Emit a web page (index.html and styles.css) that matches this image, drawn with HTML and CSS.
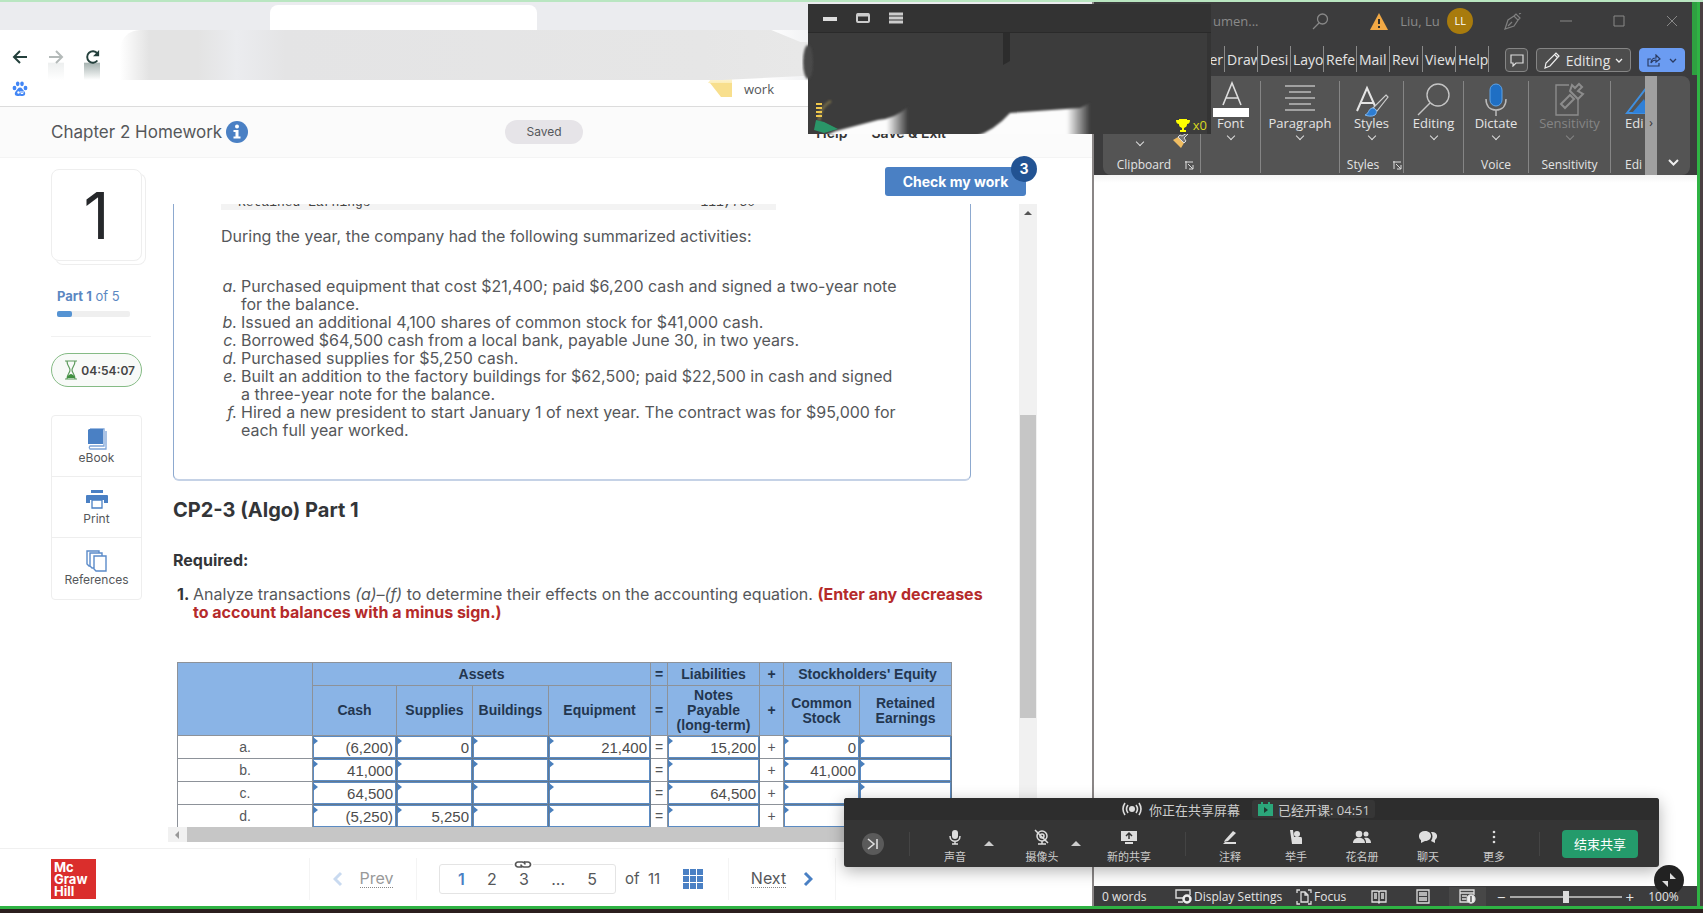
FILE: index.html
```html
<!DOCTYPE html>
<html lang="en">
<head>
    <meta charset="UTF-8">
    <meta name="viewport" content="width=device-width, initial-scale=1.0">
    <title>Chapter 2 Homework</title>
    <link rel="stylesheet" href="styles.css">
</head>
<body>
    <div class="desktop">
        <!-- Browser window -->
        <section class="browser">
            <div class="tab-strip"><div class="tab"></div></div>
            <div class="toolbar">
                <button class="nav-btn" aria-label="Back"><svg width="16" height="14" viewBox="0 0 16 14"><path d="M15 7H2M8 1L2 7l6 6" fill="none" stroke="#24403c" stroke-width="2"/></svg></button>
                <button class="nav-btn forward" aria-label="Forward"><svg width="16" height="14" viewBox="0 0 16 14"><path d="M1 7h13M8 1l6 6-6 6" fill="none" stroke="#b4bab9" stroke-width="2"/></svg></button>
                <button class="nav-btn reload" aria-label="Reload"><svg width="18" height="14" viewBox="0 0 18 16"><path d="M14 12a6.500 6.500 0 1 1 0-8" fill="none" stroke="#24403c" stroke-width="2.200"/><path d="M16 0v7H9z" fill="#24403c"/></svg></button>
                <div class="address"></div>
            </div>
            <div class="bookmarks">
                <svg class="paw" width="16" height="16" viewBox="0 0 16 16" fill="#4286f5"><ellipse cx="2.500" cy="7" rx="1.900" ry="2.300"/><ellipse cx="5.700" cy="2.800" rx="1.800" ry="2.400"/><ellipse cx="10" cy="2.800" rx="1.800" ry="2.400"/><ellipse cx="13.500" cy="7" rx="1.900" ry="2.300"/><path d="M8 6.500c2 0 2.500 2 4 3.500 2 2 1.500 5-1.500 5-1 0-1.500-.3-2.500-.3s-1.500.3-2.500.3c-3 0-3.500-3-1.500-5C5.500 8.500 6 6.500 8 6.500z"/><circle cx="6.500" cy="11.500" r="1.200" fill="#fff"/><path d="M9 10v2.500h2V10" fill="none" stroke="#fff"/></svg>
                <a class="bookmark" href="#">
                    <svg width="26" height="34" viewBox="0 0 26 34"><defs><linearGradient id="fold" x1="0" y1="1" x2="0" y2="0"><stop offset="0" stop-color="#fbe9a6"/><stop offset="1" stop-color="#fff" stop-opacity="0"/></linearGradient></defs><path d="M0 18L13 0h11v20z" fill="url(#fold)"/><path d="M2 18h22v14H13z" fill="#f8df8d"/></svg>
                    work
                </a>
            </div>

            <header class="page-header">
                <h1>Chapter 2 Homework</h1>
                <svg class="info" width="22" height="22" viewBox="0 0 22 22"><circle cx="11" cy="11" r="11" fill="#4a80c4"/><circle cx="11" cy="5.500" r="2" fill="#fff"/><path d="M7.500 9H12.500v6.500H14.500v2H7.500v-2h2V11h-2z" fill="#fff"/></svg>
                <span class="saved">Saved</span>
                <nav class="header-links"><a href="#">Help</a><a href="#">Save &amp; Exit</a></nav>
            </header>

            <main class="main">
                <aside class="sidebar">
                    <div class="question-card">1</div>
                    <div class="part">
                        <b>Part 1</b> of 5
                        <div class="progress"><span></span></div>
                    </div>
                    <div class="timer">
                        <svg width="14" height="20" viewBox="0 0 14 20"><path d="M1 1h12M1 19h12M3 1c0 5 3 6 3 9s-3 4-3 9M11 1c0 5-3 6-3 9s3 4 3 9" fill="none" stroke="#5c9a5c" stroke-width="1.200"/><path d="M3 18c0-3 4-4 4-4s4 1 4 4z" fill="#3f8f3f"/></svg>
                        04:54:07
                    </div>
                    <div class="tools">
                        <button>
                            <svg width="22" height="22" viewBox="0 0 22 22"><path d="M4 1h14v17H4a2 2 0 0 0 0 3h14M20 3v18H4" fill="none" stroke="#7da4d8" stroke-width="1.300"/><path d="M3 1h14v15H2V2z" fill="#4a80c4"/></svg>
                            eBook
                        </button>
                        <button>
                            <svg width="24" height="22" viewBox="0 0 24 22"><path d="M6 1h12v3H6zM2 6h20q1 0 1 1v7h-4v-3H5v3H1V7q0-1 1-1z" fill="#4a80c4"/><path d="M7 11h10v8H7z" fill="#fff" stroke="#4a80c4" stroke-width="1.300"/></svg>
                            Print
                        </button>
                        <button>
                            <svg width="22" height="22" viewBox="0 0 22 22" fill="#fff" stroke="#5b8bc9" stroke-width="1.400"><path d="M1 1h12v15H3L1 14z"/><path d="M4 3h12v15H6l-2-2z"/><path d="M8 6h12v15H10l-2-2z"/></svg>
                            References
                        </button>
                    </div>
                </aside>

                <div class="content">
                    <div class="actions">
                        <button class="check-btn">Check my work<span class="badge">3</span></button>
                    </div>
                    <div class="scroller">
                        <div class="scroll-view">
                            <div class="problem">
                                <div class="ledger"><span>Retained Earnings</span><span>111,750</span></div>
                                <p>During the year, the company had the following summarized activities:</p>
                                <ol class="activities">
                                    <li><i>a.</i><span>Purchased equipment that cost $21,400; paid $6,200 cash and signed a two-year note<br>for the balance.</span></li>
                                    <li><i>b.</i><span>Issued an additional 4,100 shares of common stock for $41,000 cash.</span></li>
                                    <li><i>c.</i><span>Borrowed $64,500 cash from a local bank, payable June 30, in two years.</span></li>
                                    <li><i>d.</i><span>Purchased supplies for $5,250 cash.</span></li>
                                    <li><i>e.</i><span>Built an addition to the factory buildings for $62,500; paid $22,500 in cash and signed<br>a three-year note for the balance.</span></li>
                                    <li><i>f.</i><span>Hired a new president to start January 1 of next year. The contract was for $95,000 for<br>each full year worked.</span></li>
                                </ol>
                            </div>
                            <h2>CP2-3 (Algo) Part 1</h2>
                            <h3>Required:</h3>
                            <div class="requirement">
                                <b>1.</b>
                                <span>Analyze transactions <i>(a)–(f)</i> to determine their effects on the accounting equation. <strong>(Enter any decreases<br>to account balances with a minus sign.)</strong></span>
                            </div>

                            <table class="equation">
                                <colgroup>
                                    <col class="c-label"><col class="c-cash"><col class="c-mid"><col class="c-mid"><col class="c-equip"><col class="c-eq"><col class="c-notes"><col class="c-plus"><col class="c-mid"><col class="c-notes">
                                </colgroup>
                                <thead>
                                    <tr class="groups">
                                        <th rowspan="2"></th><th colspan="4">Assets</th><th>=</th><th>Liabilities</th><th>+</th><th colspan="2">Stockholders' Equity</th>
                                    </tr>
                                    <tr class="accounts">
                                        <th>Cash</th><th>Supplies</th><th>Buildings</th><th>Equipment</th><th>=</th><th>Notes Payable (long-term)</th><th>+</th><th>Common Stock</th><th>Retained Earnings</th>
                                    </tr>
                                </thead>
                                <tbody>
                                    <tr>
                                        <td>a.</td>
                                        <td class="cell"><input aria-label="a Cash" value="(6,200)"></td>
                                        <td class="cell"><input aria-label="a Supplies" value="0"></td>
                                        <td class="cell"><input aria-label="a Buildings"></td>
                                        <td class="cell"><input aria-label="a Equipment" value="21,400"></td>
                                        <td>=</td>
                                        <td class="cell"><input aria-label="a Notes Payable" value="15,200"></td>
                                        <td>+</td>
                                        <td class="cell"><input aria-label="a Common Stock" value="0"></td>
                                        <td class="cell"><input aria-label="a Retained Earnings"></td>
                                    </tr>
                                    <tr>
                                        <td>b.</td>
                                        <td class="cell"><input aria-label="b Cash" value="41,000"></td>
                                        <td class="cell"><input aria-label="b Supplies"></td>
                                        <td class="cell"><input aria-label="b Buildings"></td>
                                        <td class="cell"><input aria-label="b Equipment"></td>
                                        <td>=</td>
                                        <td class="cell"><input aria-label="b Notes Payable"></td>
                                        <td>+</td>
                                        <td class="cell"><input aria-label="b Common Stock" value="41,000"></td>
                                        <td class="cell"><input aria-label="b Retained Earnings"></td>
                                    </tr>
                                    <tr>
                                        <td>c.</td>
                                        <td class="cell"><input aria-label="c Cash" value="64,500"></td>
                                        <td class="cell"><input aria-label="c Supplies"></td>
                                        <td class="cell"><input aria-label="c Buildings"></td>
                                        <td class="cell"><input aria-label="c Equipment"></td>
                                        <td>=</td>
                                        <td class="cell"><input aria-label="c Notes Payable" value="64,500"></td>
                                        <td>+</td>
                                        <td class="cell"><input aria-label="c Common Stock"></td>
                                        <td class="cell"><input aria-label="c Retained Earnings"></td>
                                    </tr>
                                    <tr>
                                        <td>d.</td>
                                        <td class="cell"><input aria-label="d Cash" value="(5,250)"></td>
                                        <td class="cell"><input aria-label="d Supplies" value="5,250"></td>
                                        <td class="cell"><input aria-label="d Buildings"></td>
                                        <td class="cell"><input aria-label="d Equipment"></td>
                                        <td>=</td>
                                        <td class="cell"><input aria-label="d Notes Payable"></td>
                                        <td>+</td>
                                        <td class="cell"><input aria-label="d Common Stock"></td>
                                        <td class="cell"><input aria-label="d Retained Earnings"></td>
                                    </tr>
                                </tbody>
                            </table>
                        </div>
                        <div class="v-bar"><svg width="10" height="6" viewBox="0 0 10 6"><path d="M5 1l4 4H1z" fill="#555"/></svg><span></span></div>
                        <div class="h-bar"><svg width="6" height="10" viewBox="0 0 6 10"><path d="M1 5l4-4v8z" fill="#999"/></svg><span></span></div>
                    </div>
                </div>
            </main>

            <footer class="page-footer">
                <div class="logo">Mc<br>Graw<br>Hill</div>
                <a class="prev" href="#"><svg width="10" height="16" viewBox="0 0 10 16"><path d="M8 2L2 8l6 6" fill="none" stroke="#c9daf0" stroke-width="3"/></svg><span>Prev</span></a>
                <div class="pager">
                    <a class="current" href="#">1</a><a href="#">2</a><a href="#">3<svg class="link-icon" width="20" height="9" viewBox="0 0 20 9"><path d="M9 7H5a2.500 2.500 0 0 1 0-5h4q3 0 3 2.500M11 2h4a2.500 2.500 0 0 1 0 5h-4q-3 0-3-2.500" fill="none" stroke="#555" stroke-width="1.700"/></svg></a><span>...</span><a href="#">5</a>
                </div>
                <span class="total">of&nbsp; 11</span>
                <svg class="grid-icon" width="20" height="20" viewBox="0 0 20 20" fill="#4a80c4"><path d="M0 0h6v6H0zM7 0h6v6H7zM14 0h6v6h-6zM0 7h6v6H0zM7 7h6v6H7zM14 7h6v6h-6zM0 14h6v6H0zM7 14h6v6H7zM14 14h6v6h-6z"/></svg>
                <a class="next" href="#"><span>Next</span><svg width="10" height="16" viewBox="0 0 10 16"><path d="M2 2l6 6-6 6" fill="none" stroke="#4a80c4" stroke-width="3"/></svg></a>
            </footer>
        </section>

        <!-- Word window -->
        <section class="word">
            <div class="word-title">
                <span class="doc-name">umen...</span>
                <svg class="t-search" width="17" height="17" viewBox="0 0 17 17" fill="none" stroke="#888" stroke-width="1.300"><circle cx="10.500" cy="6" r="5"/><path d="M7 10l-6 6"/></svg>
                <svg class="t-warn" width="18" height="17" viewBox="0 0 18 17"><path d="M9 0l9 17H0z" fill="#f2a945"/><path d="M9 6v5M9 13v2" stroke="#33302a" stroke-width="2"/></svg>
                <span class="user">Liu, Lu</span>
                <span class="avatar">LL</span>
                <svg class="t-pen" width="18" height="17" viewBox="0 0 18 17" fill="none" stroke="#808080" stroke-width="1.200"><path d="M1 16l3-9 6-4 4 4-4 6zM10 3l2-2 4 4-2 2M15 1l2-1M4 13l4-4"/></svg>
                <svg class="win" width="12" height="12" viewBox="0 0 12 12"><path d="M0 6h12" stroke="#888"/></svg>
                <svg class="win" width="12" height="12" viewBox="0 0 12 12"><path d="M1 1h10v10H1z" fill="none" stroke="#888"/></svg>
                <svg class="win" width="12" height="12" viewBox="0 0 12 12"><path d="M1 1l10 10M11 1L1 11" stroke="#888"/></svg>
            </div>
            <div class="word-tabs">
                <div class="tab-list">
                    <a class="cut" href="#">er</a><a href="#">Draw</a><a href="#">Desi</a><a href="#">Layo</a><a href="#">Refe</a><a href="#">Mail</a><a href="#">Revi</a><a href="#">View</a><a href="#">Help</a>
                </div>
                <button class="comment" aria-label="Comments"><svg width="14" height="13" viewBox="0 0 14 13"><path d="M1 1h12v8H6l-3 3V9H1z" fill="none" stroke="#ddd" stroke-width="1.200"/></svg></button>
                <button class="mode"><svg width="17" height="17" viewBox="0 0 17 17" fill="none" stroke="#eee" stroke-width="1.200"><path d="M1 16l1-5L12 1l3 3L6 14zM11 3l3 3"/></svg>Editing<svg width="8" height="5" viewBox="0 0 8 5"><path d="M1 1l3 3 3-3" fill="none" stroke="#eee" stroke-width="1.300"/></svg></button>
                <button class="share" aria-label="Share"><svg width="14" height="13" viewBox="0 0 14 13" fill="none" stroke="#2b3c63" stroke-width="1.200"><path d="M4 5H1v7h11V9M4 9c0-4 3-5 5-5V1l4 4-4 3V6C7 6 5 7 4 9z"/></svg><svg width="8" height="5" viewBox="0 0 8 5"><path d="M1 1l3 3 3-3" fill="none" stroke="#2b3c63" stroke-width="1.300"/></svg></button>
            </div>
            <div class="ribbon">
                <div class="group g-clip">
                    <div class="clip-row"><span class="chev"></span><svg width="18" height="17" viewBox="0 0 18 17"><path d="M2 8l8 8 3-5-6-6z" fill="#f0bd62"/><path d="M7 5l6 6 2-2-2-3 4-4-1-1-5 3-2-1z" fill="#777" stroke="#ddd"/></svg></div>
                    <div class="group-name">Clipboard<svg width="9" height="9" viewBox="0 0 9 9" fill="none" stroke="#ddd"><path d="M0 1h8M1 0v8M3 3l5 5M8 4v4H4"/></svg></div>
                </div>
                <div class="group g-font">
                    <svg width="38" height="36" viewBox="0 0 38 36"><path d="M11 24L20 2l9 22M14 17h12" fill="none" stroke="#ddd" stroke-width="1.600"/><path d="M1 27h36v9H1z" fill="#fff"/></svg>
                    <button>Font</button><span class="chev"></span>
                </div>
                <div class="group g-para">
                    <svg width="32" height="36" viewBox="0 0 32 36"><path d="M1 5h30M5 11h22M1 17h30M5 23h22M1 29h30" stroke="#bbb" stroke-width="1.600"/></svg>
                    <button>Paragraph</button><span class="chev"></span>
                </div>
                <div class="group g-styles">
                    <svg width="36" height="36" viewBox="0 0 36 36"><path d="M3 30L13 7l8 18M7 22h12" fill="none" stroke="#e4e4e4" stroke-width="2"/><path d="M32 14l2 2-11 14-4-3z" fill="#545454" stroke="#ccc" stroke-width="1.200"/><path d="M18 27c4 0 6 4 3 7-3 2-8 1-10 0 4-1 3-6 7-7z" fill="#2d7dd2" stroke="#7cb5ef"/></svg>
                    <button>Styles</button><span class="chev"></span>
                    <div class="group-name">Styles<svg width="9" height="9" viewBox="0 0 9 9" fill="none" stroke="#ddd"><path d="M0 1h8M1 0v8M3 3l5 5M8 4v4H4"/></svg></div>
                </div>
                <div class="group g-edit">
                    <svg width="36" height="36" viewBox="0 0 36 36" fill="none" stroke="#c4c4c4" stroke-width="1.400"><circle cx="22" cy="14" r="11"/><path d="M14 22L2 34"/></svg>
                    <button>Editing</button><span class="chev"></span>
                </div>
                <div class="group g-voice">
                    <svg width="24" height="36" viewBox="0 0 24 36"><rect x="6" y="3" width="12" height="22" rx="6" fill="#1f6fc4" stroke="#5ea3e6"/><path d="M2 18c0 7 4 11 10 11s10-4 10-11M12 29v6" fill="none" stroke="#bbb" stroke-width="1.500"/></svg>
                    <button>Dictate</button><span class="chev"></span>
                    <div class="group-name">Voice</div>
                </div>
                <div class="group g-sens">
                    <svg width="32" height="36" viewBox="0 0 32 36" fill="none" stroke="#8c8c8c" stroke-width="1.400"><path d="M15 4H2v30h22V18"/><path d="M7 23l9-9 4 4-9 9zM16 10l8 8 5-5-5-3 4-4-3-3-4 4-3-3z" stroke-width="2"/></svg>
                    <button disabled>Sensitivity</button><span class="chev dim"></span>
                    <div class="group-name">Sensitivity</div>
                </div>
                <div class="group g-editor">
                    <svg width="34" height="36" viewBox="0 0 34 36"><path d="M2 32L22 6l6 6v20z" fill="none" stroke="#3f8fe0" stroke-width="2"/><path d="M7 32L19 18l6 14z" fill="#2f80d8"/></svg>
                    <button>Edi</button>
                    <div class="group-name">Edi</div>
                </div>
                <div class="ribbon-scroll">›</div>
                <div class="ribbon-end"><svg width="11" height="7" viewBox="0 0 11 7"><path d="M1 1l4.500 4.500L10 1" fill="none" stroke="#eee" stroke-width="2"/></svg></div>
            </div>
            <div class="document"></div>
            <div class="status">
                <span class="words">0 words</span>
                <span class="display"><svg width="17" height="15" viewBox="0 0 17 15"><path d="M8 9H1V1h14v5M3 13h5" fill="none" stroke="#ddd" stroke-width="1.400"/><circle cx="12" cy="10" r="3.500" fill="none" stroke="#eee" stroke-width="2.500"/></svg>Display Settings</span>
                <span class="focus"><svg width="16" height="16" viewBox="0 0 16 16" fill="none" stroke="#ddd" stroke-width="1.300"><path d="M1 4V1h3M12 1h3v3M15 12v3h-3M4 15H1v-3M5 3h4l3 3v7H5zM9 3v3h3"/></svg>Focus</span>
                <svg class="view" width="16" height="14" viewBox="0 0 16 14" fill="none" stroke="#ddd" stroke-width="1.300"><path d="M1 1h6l1 1 1-1h6v11H9l-1 1-1-1H1zM8 2v11M3 4h3M3 6h3M3 8h3M10 4h3M10 6h3M10 8h3"/></svg>
                <svg class="view" width="14" height="15" viewBox="0 0 14 15" fill="none" stroke="#ddd" stroke-width="1.300"><path d="M1 1h12v13H1zM3 4h8M3 6h8M3 9h8M3 11h8"/></svg>
                <svg class="view on" width="17" height="15" viewBox="0 0 17 15" fill="none" stroke="#ddd" stroke-width="1.300"><path d="M9 13H1V1h14v5M1 4h14M3 7h5M3 10h4"/><circle cx="12" cy="10" r="4" fill="#eee"/><path d="M12 7v6" stroke="#444"/></svg>
                <span class="zoom"><span>−</span><input type="range" aria-label="Zoom" min="0" max="100" value="50"><span>+</span></span>
                <span class="percent">100%</span>
            </div>
        </section>
        <div class="edge"></div>
    </div>

    <!-- Meeting video panel -->
    <div class="meeting">
        <div class="meeting-bar">
            <svg width="14" height="12" viewBox="0 0 14 12"><path d="M0 7h14" stroke="#ddd" stroke-width="4"/></svg>
            <svg width="14" height="12" viewBox="0 0 14 12"><rect x="1" y="2" width="12" height="8" rx="1" fill="none" stroke="#ccc" stroke-width="2"/><path d="M1 3h12" stroke="#ccc" stroke-width="3"/></svg>
            <svg width="14" height="12" viewBox="0 0 14 12"><path d="M0 2h14M0 6h14M0 10h14" stroke="#ccc" stroke-width="3"/></svg>
        </div>
        <svg class="meeting-view" width="403" height="101" viewBox="0 0 403 101">
            <defs>
                <filter id="soft"><feGaussianBlur stdDeviation="1.200"/></filter>
                <linearGradient id="fadeLeft"><stop offset="0.750" stop-color="#fcfcfc"/><stop offset="1" stop-color="#3c3c3c"/></linearGradient>
                <linearGradient id="fadeRight"><stop offset="0.800" stop-color="#fcfcfc"/><stop offset="1" stop-color="#3c3c3c"/></linearGradient>
            </defs>
            <path d="M0 0h403v101H0z" fill="#3c3c3c"/>
            <path d="M195 0h7v28l-7 4z" fill="#2c2c2c"/>
            <path d="M399 0h4v101h-4z" fill="#343434"/>
            <path d="M14 104L28 98 70 87Q86 86 100 74V104z" fill="url(#fadeLeft)" filter="url(#soft)"/>
            <path d="M166 104Q186 98 202 80L272 75 282 70V104z" fill="url(#fadeRight)" filter="url(#soft)"/>
            <ellipse cx="0" cy="29" rx="5" ry="17" fill="#4a4a4a" filter="url(#soft)"/>
            <path d="M11 88c1-8 2-14 12-20" fill="none" stroke="#6f6747" stroke-width="3" filter="url(#soft)"/>
            <path d="M8 71h6M8 75h6M8 79h6M8 83h6" stroke="#f0c84c" stroke-width="2"/>
            <path d="M8 87l8 2 14 7-14 4-10-3z" fill="#2a9568"/>
            <path d="M371 86h8v6q0 2-3 3v2h2v2h-6v-2h2v-2q-3-1-3-3zM368 87h3v4q-3 0-3-4zM382 87h-3v4q3 0 3-4z" fill="#ff0"/>
        </svg>
        <span class="trophies">x0</span>
    </div>

    <!-- Screen sharing controls -->
    <div class="sharing">
        <div class="sharing-top">
            <svg width="20" height="14" viewBox="0 0 20 14" fill="none" stroke="#ddd" stroke-width="1.600"><circle cx="10" cy="7" r="3" fill="#ddd" stroke="none"/><path d="M6 3q-3 4 0 8M3 1q-4 6 0 12M14 3q3 4 0 8M17 1q4 6 0 12"/></svg>
            <span>你正在共享屏幕</span>
            <span class="class-time"><svg width="15" height="14" viewBox="0 0 15 14"><path d="M0 2h3V0h2v2h5V0h2v2h3v12H0z" fill="#2ba67a"/><path d="M6 5l4 3-4 3z" fill="#1f3a30"/></svg>已经开课: 04:51</span>
        </div>
        <div class="sharing-row">
            <button class="collapse" aria-label="Collapse"><svg width="12" height="12" viewBox="0 0 12 12"><path d="M1 1l6 5-6 5M10 1v10" fill="none" stroke="#ddd" stroke-width="1.600"/></svg></button>
            <span class="sep first"></span>
            <button class="tool wide"><svg width="16" height="16" viewBox="0 0 16 16"><rect x="5" y="1" width="6" height="9" rx="3" fill="#ddd"/><path d="M3 7c0 7 10 7 10 0M8 12v3M5 15h6" fill="none" stroke="#ddd" stroke-width="1.500"/></svg>声音</button>
            <span class="up"></span>
            <button class="tool wide"><svg width="16" height="16" viewBox="0 0 16 16" fill="none" stroke="#ddd" stroke-width="1.500"><circle cx="8" cy="7" r="5"/><circle cx="8" cy="7" r="2"/><path d="M1 1l13 13M4 15h8M8 12v3"/></svg>摄像头</button>
            <span class="up"></span>
            <button class="tool wide"><svg width="16" height="16" viewBox="0 0 16 16"><path d="M0 2h16v10H0zM4 13h8v2H4z" fill="#ddd"/><path d="M8 10V5M5 7l3-3 3 3" fill="none" stroke="#333" stroke-width="1.500"/></svg>新的共享</button>
            <span class="sep"></span>
            <button class="tool"><svg width="16" height="16" viewBox="0 0 16 16"><path d="M3 11l8-9 3 2-8 8-4 1zM3 13h11v2H1z" fill="#ddd"/></svg>注释</button>
            <button class="tool"><svg width="16" height="16" viewBox="0 0 16 16" fill="#ddd"><circle cx="9" cy="5" r="3"/><path d="M2 1h3l1 7h7q1 0 1 2v5H4z"/></svg>举手</button>
            <button class="tool"><svg width="18" height="16" viewBox="0 0 18 16" fill="#ddd"><circle cx="6" cy="5" r="3.300"/><circle cx="13" cy="5" r="2.500"/><path d="M0 14c0-7 12-7 12 0zM13 14c0-3-1-4-2-5 4-1 7 1 7 5z"/></svg>花名册</button>
            <button class="tool"><svg width="18" height="16" viewBox="0 0 18 16" fill="#ddd"><path d="M6 2c8 0 8 10 0 10L2 14V11C-2 8 0 2 6 2z"/><path d="M12 3c6-1 8 5 4 8v3l-4-2c2-3 2-6 0-9z"/></svg>聊天</button>
            <button class="tool"><svg width="16" height="16" viewBox="0 0 16 16" fill="#ddd"><circle cx="8" cy="3" r="1.300"/><circle cx="8" cy="8" r="1.300"/><circle cx="8" cy="13" r="1.300"/></svg>更多</button>
            <span class="sep last"></span>
            <button class="stop">结束共享</button>
        </div>
    </div>
    <button class="float-btn" aria-label="Expand"><svg width="14" height="14" viewBox="0 0 14 14" fill="#ddd"><path d="M8 0v6h6zM0 8h6v6z"/></svg></button>
</body>
</html>
```

FILE: styles.css
```css
* {
    box-sizing: border-box;
}

body {
    margin: 0;
    height: 100vh;
    overflow: hidden;
    position: relative;
    background: #2b1f1e;
    font-family: Inter, "Noto Sans CJK SC", sans-serif;
    color: #55575a;
    font-size: 16px;
}

a {
    color: inherit;
    text-decoration: none;
}

button {
    font: inherit;
    color: inherit;
    background: none;
    border: 0;
    padding: 0;
}

svg {
    flex: none;
    display: block;
}

.desktop {
    display: grid;
    grid-template-columns: 1094fr 603fr 6px;
    height: calc(100vh - 4px);
    border-bottom: 3px solid #2fb344;
    border-top: 2px solid #b9e6c1;
}

/* Browser */
.browser {
    display: flex;
    flex-direction: column;
    min-width: 0;
    min-height: 0;
    background: #fff;
    border-right: 2px solid #8a8686;
}

.tab-strip {
    height: 28px;
    padding: 3px 0 0 270px;
    background: #ebecef;
}

.tab {
    width: 267px;
    height: 25px;
    background: #fff;
    border-radius: 8px 8px 0 0;
}

.toolbar {
    display: flex;
    height: 50px;
    padding-left: 12px;
    align-items: flex-start;
    background: linear-gradient(to right, #fff 70%, #ebecef 76%);
}

.nav-btn {
    display: flex;
    align-items: flex-start;
    margin: 20px 20px 0 0;
    width: 16px;
    height: 30px;
}

.forward {
    background: linear-gradient(to bottom, transparent 40%, #eef0f0 45%, #fff 100%);
}

.reload {
    background: linear-gradient(to bottom, transparent 40%, #a9b5b3 45%, #fff 100%);
}

.address {
    flex: 1;
    height: 50px;
    background: linear-gradient(to right, #fff, #e3e3e3 3%, #e3e3e3 8%, #ebecef 12%, #e4e4e5 17%, #e6e6e6 60%, #eee 100%);
    clip-path: polygon(0 0, 67% 0, 70% 12px, 100% 14px, 100% 32px, 62% 50px, 0 50px);
    border-radius: 20px 0 0 0;
}

.bookmarks {
    display: flex;
    align-items: center;
    justify-content: space-between;
    height: 27px;
    padding: 0 318px 8px 12px;
    border-bottom: 1px solid #dcdcdc;
}

.bookmark {
    display: flex;
    align-items: center;
    gap: 10px;
    height: 18px;
    font-size: 13px;
    font-family: "Open Sans", sans-serif;
}

.bookmark svg {
    margin-top: -14px;
}

.page-header {
    display: flex;
    align-items: center;
    height: 51px;
    padding-left: 51px;
    background: #fbfbfb;
    border-bottom: 1px solid #f4f4f4;
}

.page-header h1 {
    margin: 0;
    font-size: 17px;
    font-weight: 400;
    width: 167px;
    white-space: nowrap;
}

.info {
    margin-left: 8px;
}

.saved {
    margin-left: 257px;
    width: 78px;
    line-height: 24px;
    border-radius: 12px;
    background: #e6e4e8;
    text-align: center;
    font-size: 12px;
}

.header-links {
    display: flex;
    gap: 24px;
    margin-left: auto;
    padding-right: 146px;
    font-size: 14px;
    font-weight: 600;
    color: #333;
}

.main {
    display: flex;
    flex: 1;
    min-height: 0;
}

.sidebar {
    flex: none;
    width: 168px;
    padding: 11px 17px 0 51px;
}

.question-card {
    width: 91px;
    height: 92px;
    line-height: 92px;
    text-align: center;
    font-size: 64px;
    color: #26282b;
    border: 1px solid #eee;
    border-radius: 8px;
    box-shadow: 4px 4px 0 -1px #fff, 4px 4px 0 0 #eee;
}

.part {
    margin-top: 26px;
    padding: 0 0 19px 6px;
    width: 100px;
    font-size: 13px;
    line-height: 18px;
    color: #5b87c2;
    border-bottom: 1px solid #f1f1f1;
}

.progress {
    width: 73px;
    height: 6px;
    margin-top: 6px;
    background: #efefef;
    border-radius: 2px;
}

.progress span {
    display: block;
    width: 20%;
    height: 6px;
    border-radius: 2px;
    background: #5593d3;
}

.timer {
    display: flex;
    align-items: center;
    justify-content: space-between;
    width: 91px;
    height: 34px;
    margin-top: 16px;
    padding: 0 6px 0 12px;
    border: 1px solid #85bb85;
    border-radius: 17px;
    background: #f8faf8;
    font-size: 12px;
    font-weight: 600;
    color: #444;
}

.tools {
    width: 91px;
    margin-top: 28px;
    border: 1px solid #eee;
    border-radius: 4px;
}

.tools button {
    display: flex;
    flex-direction: column;
    align-items: center;
    width: 100%;
    height: 61px;
    padding-top: 12px;
    font-size: 12px;
    line-height: 16px;
    border-bottom: 1px solid #eee;
}

.tools button:last-child {
    border-bottom: 0;
}

.content {
    flex: 1;
    min-width: 0;
    display: flex;
    flex-direction: column;
}

.actions {
    display: flex;
    justify-content: flex-end;
    padding: 9px 66px 8px 0;
}

.check-btn {
    position: relative;
    width: 141px;
    height: 29px;
    border-radius: 3px;
    background: #4a80c4;
    color: #fff;
    font-size: 14px;
    font-weight: 700;
}

.badge {
    position: absolute;
    top: -11px;
    right: -11px;
    width: 26px;
    line-height: 26px;
    border-radius: 13px;
    background: #225393;
}

.scroller {
    flex: 1;
    min-height: 0;
    display: grid;
    grid-template-columns: 1fr 18px;
    grid-template-rows: 1fr 15px;
    margin: 0 55px 6px 0;
}

.scroll-view {
    overflow: hidden;
    padding: 0 0 0 5px;
}

.problem {
    width: 798px;
    padding: 0 0 40px 47px;
    border: 1px solid #8da9cf;
    border-bottom: 2px solid #c5d2e6;
    border-top: 0;
    border-radius: 0 0 6px 6px;
}

.ledger {
    display: flex;
    justify-content: space-between;
    width: 555px;
    height: 18px;
    margin-top: -12px;
    padding: 0 21px 0 17px;
    background: #f3f3f3;
    font: 13px/22px "Liberation Mono", monospace;
    color: #444;
}

.problem p {
    margin: 17px 0 32px;
    line-height: 18px;
}

.activities {
    list-style: none;
    margin: 0;
    padding: 0;
    line-height: 18px;
}

.activities li {
    display: flex;
    gap: 4px;
    white-space: nowrap;
}

.activities li i {
    width: 16px;
    text-align: right;
}

h2 {
    margin: 16px 0 0;
    font-size: 20px;
    line-height: 26px;
    font-weight: 700;
    color: #333538;
}

h3 {
    margin: 27px 0 0;
    font-size: 16px;
    line-height: 20px;
    font-weight: 700;
    color: #333538;
}

.requirement {
    display: flex;
    gap: 5px;
    margin-top: 15px;
    padding-left: 4px;
    line-height: 18px;
    white-space: nowrap;
}

.requirement b {
    width: 11px;
    color: #333538;
}

.requirement strong {
    font-weight: 700;
    color: #b52b2b;
}

.equation {
    table-layout: fixed;
    width: 775px;
    margin: 41px 0 0 4px;
    border-collapse: collapse;
    font: 14px "Liberation Sans", sans-serif;
    text-align: center;
}

.c-label { width: 135px; }
.c-cash { width: 84px; }
.c-mid { width: 76px; }
.c-equip { width: 102px; }
.c-eq { width: 17px; }
.c-notes { width: 92px; }
.c-plus { width: 24px; }

.equation th,
.equation td {
    padding: 0;
    border: 1px solid #8d9299;
}

.equation th {
    background: #8ab4e6;
    color: #23364f;
    line-height: 15px;
}

.groups th {
    height: 23px;
}

.accounts th {
    height: 50px;
}

.equation td {
    height: 23px;
}

.equation .cell {
    position: relative;
    border-color: #64798f;
}

.cell::before {
    content: "";
    position: absolute;
    left: 0;
    top: 1px;
    border: 4px solid transparent;
    border-left: 5px solid #4a7fbc;
    border-right: 0;
}

.cell input {
    display: block;
    width: 100%;
    height: 22px;
    padding: 0 2px;
    border: 1px solid #5b8bc3;
    background: none;
    text-align: right;
    font: 15px "Liberation Sans", sans-serif;
    color: #4c4c4c;
}

.v-bar {
    background: #f1f1f1;
    display: flex;
    flex-direction: column;
    align-items: center;
    padding-top: 6px;
}

.v-bar span {
    width: 16px;
    height: 303px;
    margin-top: 199px;
    background: #c6c6c6;
}

.h-bar {
    display: flex;
    align-items: center;
    gap: 7px;
    padding-left: 6px;
    background: #f1f1f1;
}

.h-bar span {
    flex: 1;
    height: 15px;
    background: #c6c6c6;
}

.page-footer {
    flex: none;
    display: flex;
    align-items: center;
    height: 58px;
    padding: 2px 0 0 51px;
    border-top: 1px solid #f0f0f0;
    font-size: 16px;
}

.logo {
    width: 45px;
    height: 40px;
    padding: 2px 0 0 3px;
    background: #da2e2c;
    color: #fff;
    font-size: 13px;
    line-height: 12px;
    font-weight: 700;
}

.prev,
.next {
    display: flex;
    align-items: center;
    justify-content: center;
    gap: 17px;
    width: 108px;
    height: 42px;
    border: 1px solid #f4f4f4;
    border-width: 0 1px;
}

.prev {
    margin-left: 213px;
    color: #999;
}

.prev span,
.next span {
    border-bottom: 1px dotted #888;
    line-height: 18px;
}

.next {
    margin-left: 25px;
}

.pager {
    display: flex;
    align-items: center;
    justify-content: space-between;
    width: 177px;
    height: 30px;
    margin-left: 22px;
    padding: 0 18px;
    border: 1px solid #e4e4e4;
    border-radius: 3px;
}

.pager a {
    position: relative;
}

.pager .current {
    color: #4a80c4;
    font-weight: 600;
}

.link-icon {
    position: absolute;
    top: -9px;
    left: -6px;
    background: #fff;
}

.total {
    margin-left: 9px;
    width: 36px;
    font-size: 15px;
    white-space: nowrap;
}

.grid-icon {
    margin-left: 22px;
}

/* Word */
.word {
    display: flex;
    flex-direction: column;
    min-width: 0;
    background: #3c3c3d;
    color: #e4e4e4;
    font-family: "Open Sans", sans-serif;
    font-size: 12px;
}

.word-title {
    display: flex;
    align-items: center;
    height: 44px;
    padding: 0 19px 6px 119px;
    color: #8a8a8a;
    font-size: 13px;
}

.doc-name {
    width: 101px;
}

.t-warn {
    margin-left: 41px;
}

.user {
    margin-left: 12px;
    width: 48px;
}

.avatar {
    width: 26px;
    line-height: 26px;
    border-radius: 13px;
    background: #a87b0d;
    color: #fff;
    text-align: center;
    font-size: 11px;
}

.t-pen {
    margin-left: 31px;
}

.win {
    margin-left: 41px;
}

.t-pen + .win {
    margin-left: 38px;
}

.word-tabs {
    display: flex;
    align-items: flex-start;
    height: 29px;
    padding: 0 12px 0 98px;
}

.tab-list {
    display: flex;
    flex: 1;
}

.tab-list a {
    flex: 0 0 33px;
    height: 26px;
    padding: 0 1px 0 2px;
    border-right: 1px solid #8a8a8a;
    overflow: hidden;
    white-space: nowrap;
    font-size: 14px;
    line-height: 28px;
}

.tab-list .cut {
    text-align: right;
}

.word-tabs button {
    display: flex;
    align-items: center;
    justify-content: center;
    gap: 5px;
    height: 24px;
    margin: 2px 0 0 8px;
    border: 1px solid #858585;
    border-radius: 4px;
    background: #4d4d4d;
    font-size: 14px;
}

.word-tabs .comment {
    width: 23px;
}

.word-tabs .mode {
    width: 95px;
}

.word-tabs .share {
    width: 46px;
    gap: 8px;
    background: #6b9cf2;
    border-color: #6b9cf2;
}

.ribbon {
    display: flex;
    flex: none;
    height: 99px;
    margin: 1px 7px 0 9px;
    background: #545454;
    border-radius: 8px;
    overflow: hidden;
}

.group {
    flex: none;
    display: flex;
    flex-direction: column;
    align-items: center;
    margin: 5px 0 2px;
    border-right: 1px solid #858585;
    white-space: nowrap;
}

.group > button {
    margin-top: -2px;
    line-height: 16px;
    font-size: 13px;
}

.group button:disabled {
    color: #858585;
}

.chev {
    width: 6px;
    height: 6px;
    margin-top: 2px;
    border: solid #ddd;
    border-width: 0 1px 1px 0;
    transform: rotate(45deg);
}

.chev.dim {
    border-color: #858585;
}

.group-name {
    display: flex;
    align-items: center;
    gap: 14px;
    margin-top: auto;
    line-height: 16px;
}

.g-clip { width: 98px; }
.g-font { width: 60px; }
.g-para { width: 79px; }
.g-styles { width: 64px; }
.g-edit { width: 60px; }
.g-voice { width: 65px; }
.g-sens { width: 82px; }

.g-styles .group-name {
    padding-left: 6px;
}

.g-clip .group-name {
    padding-left: 8px;
}

.g-editor {
    width: 34px;
    align-items: flex-start;
    padding-left: 14px;
    border: 0;
    overflow: hidden;
}

.clip-row {
    display: flex;
    align-items: center;
    gap: 28px;
    margin-top: 51px;
    padding-left: 22px;
}

.ribbon-scroll {
    width: 12px;
    background: #a0a0a0;
    color: #333;
    text-align: center;
    line-height: 94px;
}

.ribbon-end {
    flex: 1;
    padding: 83px 0 0 11px;
}

.document {
    flex: 1;
    background: linear-gradient(to bottom, #f4f4f4, #fff 8px);
}

.status {
    display: flex;
    align-items: center;
    height: 20px;
    padding: 1px 0 0 8px;
}

.words {
    width: 73px;
}

.display,
.focus {
    display: flex;
    align-items: center;
    gap: 2px;
    width: 121px;
    white-space: nowrap;
}

.focus {
    width: 75px;
}

.view {
    margin-right: 29px;
}

.view.on {
    margin-right: 21px;
    box-shadow: 0 0 0 10px #474747;
    background: #474747;
    clip-path: inset(-2px -10px -2px -10px);
}

.zoom {
    display: flex;
    align-items: center;
    gap: 4px;
    font-size: 15px;
    line-height: 18px;
}

.zoom input {
    appearance: none;
    width: 112px;
    height: 2px;
    margin: 0;
    background: #a8a8a8;
}

.zoom input::-webkit-slider-thumb {
    appearance: none;
    width: 6px;
    height: 12px;
    background: #ddd;
}

/* stays readable above the floating button */
.percent {
    position: relative;
    z-index: 4;
    margin-left: 14px;
}

.edge {
    position: relative;
    background: #4a3f42;
    border-left: 3px solid #2fb344;
}

.edge::before {
    content: "";
    position: absolute;
    top: 0;
    left: -8px;
    width: 5px;
    height: 73px;
    background: #2fa041;
}

/* Meeting panel */
.meeting {
    position: absolute;
    left: 808px;
    top: 4px;
    width: 403px;
}

.meeting-bar {
    display: flex;
    align-items: center;
    gap: 19px;
    height: 29px;
    padding-left: 15px;
    background: #333;
    border-bottom: 1px solid #2a2a2a;
}

.meeting-view {
    overflow: visible;
    clip-path: inset(0 0 0 -8px);
}

.trophies {
    position: absolute;
    right: 4px;
    bottom: 0;
    color: #d8d820;
    font: 13px/18px "Open Sans", sans-serif;
}

/* Sharing controls */
.sharing {
    position: absolute;
    z-index: 2;
    left: 844px;
    right: 44px;
    bottom: 46px;
    background: #353535;
    border-radius: 3px;
    box-shadow: 0 4px 16px rgba(0, 0, 0, 0.3);
    color: #ccc;
    font-family: "Open Sans", "Noto Sans CJK SC", sans-serif;
}

.sharing-top {
    display: flex;
    align-items: center;
    gap: 7px;
    height: 22px;
    padding-left: 278px;
    background: #2d2d2d;
    border-radius: 3px 3px 0 0;
    font-size: 13px;
}

.class-time {
    display: flex;
    align-items: center;
    gap: 5px;
    height: 18px;
    margin-left: 5px;
    padding: 0 5px 0 6px;
    background: #363636;
    border-radius: 3px;
}

.sharing-row {
    display: flex;
    align-items: center;
    height: 47px;
    padding: 0 21px 0 18px;
}

.collapse {
    display: flex;
    align-items: center;
    justify-content: center;
    width: 22px;
    height: 22px;
    border-radius: 11px;
    background: #5a5a5a;
}

.sep {
    width: 1px;
    height: 24px;
    margin: 0 11px 0 32px;
    background: #444;
}

.sep.first {
    margin: 0 21px 0 25px;
}

.sep.last {
    margin: 0 0 0 12px;
}

.tool {
    display: flex;
    flex-direction: column;
    align-items: center;
    gap: 4px;
    width: 66px;
    padding-top: 7px;
    font-size: 11px;
    line-height: 16px;
    white-space: nowrap;
}

.tool.wide {
    width: 48px;
}

.up {
    margin: 0 24px 0 5px;
    border: 5px solid transparent;
    border-top: 0;
    border-bottom-color: #ccc;
}

.stop {
    margin-left: auto;
    width: 76px;
    height: 28px;
    border-radius: 4px;
    background: #249b6b;
    color: #fff;
    font-size: 13px;
}

.float-btn {
    position: absolute;
    z-index: 3;
    right: 19px;
    bottom: 18px;
    display: flex;
    align-items: center;
    justify-content: center;
    width: 30px;
    height: 30px;
    border-radius: 15px;
    background: #222;
}
```
